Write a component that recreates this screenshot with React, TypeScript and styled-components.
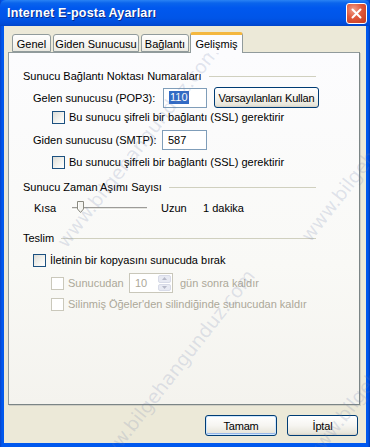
import * as React from 'react';
import styled, { createGlobalStyle } from 'styled-components';

const GlobalStyle = createGlobalStyle`
  html, body {
    margin: 0;
    padding: 0;
    background: #ece9d8;
  }
  body {
    font-family: "Liberation Sans", Arial, sans-serif;
    font-size: 11px;
    color: #000;
  }
  * {
    box-sizing: border-box;
  }
`;

const Window = styled.div`
  position: relative;
  width: 370px;
  height: 447px;
  display: flex;
  flex-direction: column;
  background: linear-gradient(90deg, #0843c8 0, #0058ee 2px, #0058ee 368px, #0038b0 370px);
  overflow: hidden;
`;

const TitleBar = styled.div`
  height: 26px;
  flex: none;
  display: flex;
  align-items: center;
  justify-content: space-between;
  padding: 0 3px 0 7px;
  background: linear-gradient(
    180deg,
    #2a83f4 0,
    #0a64ec 3px,
    #0058ee 8px,
    #0055e8 18px,
    #004bd8 24px,
    #0044c8 26px
  );
  border-radius: 6px 6px 0 0;
`;

const Title = styled.span`
  font-family: "Liberation Sans", Arial, sans-serif;
  font-weight: bold;
  font-size: 12.5px;
  color: #fff;
  text-shadow: 1px 1px 0 #0a2a8a;
  letter-spacing: 0.2px;
`;

const CloseButton = styled.div`
  width: 21px;
  height: 21px;
  border: 1px solid #fff;
  border-radius: 3px;
  background: radial-gradient(circle at 35% 30%, #f0a08c 0, #e0573a 45%, #c23a1f 100%);
  display: flex;
  align-items: center;
  justify-content: center;
`;

const Body = styled.div`
  flex: 1;
  display: flex;
  flex-direction: column;
  margin: 0 4px 4px 4px;
  padding: 6px 6px 0 4px;
  background: #ece9d8;
`;

const TabStrip = styled.div`
  display: flex;
  align-items: flex-end;
  height: 20px;
  padding-left: 4px;
  gap: 2px;
  position: relative;
  z-index: 1;
`;

const Tab = styled.div<{ $active?: boolean; $w: number }>`
  width: ${({ $w }) => $w}px;
  flex: none;
  text-align: center;
  height: ${({ $active }) => ($active ? '21px' : '18px')};
  margin: ${({ $active }) => ($active ? '0 -1px -1px -1px' : '0')};
  padding-top: 2px;
  border: 1px solid #919b9c;
  border-bottom: ${({ $active }) => ($active ? 'none' : '1px solid #919b9c')};
  border-top: ${({ $active }) => ($active ? '3px solid #f4b73f' : '1px solid #919b9c')};
  border-radius: 3px 3px 0 0;
  background: ${({ $active }) =>
    $active ? '#fcfcfe' : 'linear-gradient(180deg, #fefefe 0, #f4f3ee 70%, #e9e8e0 100%)'};
  font-size: 11px;
  white-space: nowrap;
  line-height: 14px;
`;

const Panel = styled.div`
  height: 353px;
  border: 1px solid #919b9c;
  border-right-color: #7b8586;
  border-bottom-color: #7b8586;
  box-shadow: 1px 1px 0 #d0cfc5;
  background: linear-gradient(180deg, #fcfcfe 0, #f9f9f6 60%, #f4f3ee 100%);
  padding: 15px 43px 0 14px;
  display: flex;
  flex-direction: column;
`;

const GroupHeader = styled.div<{ $top: number }>`
  display: flex;
  align-items: center;
  height: 16px;
  margin-top: ${({ $top }) => $top}px;
  gap: 7px;

  &::after {
    content: '';
    flex: 1;
    height: 0;
    border-top: 1px solid #d0d0bf;
  }
`;

const Row = styled.div<{ $top: number; $indent: number; $h?: number }>`
  display: flex;
  align-items: center;
  height: ${({ $h }) => $h ?? 14}px;
  margin-top: ${({ $top }) => $top}px;
  padding-left: ${({ $indent }) => $indent}px;
  white-space: nowrap;
`;

const FieldLabel = styled.span<{ $w: number }>`
  width: ${({ $w }) => $w}px;
  flex: none;
`;

const TextInput = styled.div<{ $w: number; $disabled?: boolean }>`
  width: ${({ $w }) => $w}px;
  height: 20px;
  flex: none;
  border: 1px solid ${({ $disabled }) => ($disabled ? '#c9c7ba' : '#7f9db9')};
  background: #fff;
  display: flex;
  align-items: center;
  padding-left: 5px;
  color: ${({ $disabled }) => ($disabled ? '#aca899' : '#000')};
  position: relative;
`;

const Selected = styled.span`
  background: #316ac5;
  color: #fff;
  padding: 0 1px;
  line-height: 13px;
`;

const PushButton = styled.button<{ $default?: boolean; $w: number; $gap?: number }>`
  width: ${({ $w }) => $w}px;
  height: 21px;
  flex: none;
  margin-left: ${({ $gap }) => $gap ?? 0}px;
  padding: 0;
  border: 1px solid #003c74;
  border-radius: 3px;
  background: linear-gradient(180deg, #ffffff 0, #f6f5f1 50%, #e7e5da 90%, #d6d0c5 100%);
  box-shadow: ${({ $default }) =>
    $default ? 'inset 0 0 0 1px #cee7ff, inset 0 -1px 0 1px #98b8ea' : 'none'};
  font-family: "Liberation Sans", Arial, sans-serif;
  font-size: 11px;
  letter-spacing: -0.2px;
  white-space: nowrap;
  color: #000;
`;

const CheckBox = styled.span<{ $disabled?: boolean }>`
  width: 13px;
  height: 13px;
  flex: none;
  margin-right: 4px;
  border: 1px solid ${({ $disabled }) => ($disabled ? '#cac8bb' : '#1c5180')};
  background: ${({ $disabled }) =>
    $disabled ? '#fff' : 'linear-gradient(135deg, #dcdcd7 0, #f4f4f0 60%, #ffffff 100%)'};
`;

const Faded = styled.span<{ $w?: number; $gap?: number }>`
  color: #aca899;
  width: ${({ $w }) => ($w ? `${$w}px` : 'auto')};
  margin-left: ${({ $gap }) => $gap ?? 0}px;
  flex: none;
`;

const SliderBox = styled.div`
  width: 75px;
  height: 14px;
  flex: none;
  position: relative;
  margin-right: 14px;
`;

const SliderTrack = styled.div`
  position: absolute;
  left: 0;
  right: 0;
  top: 6px;
  height: 3px;
  border-top: 1px solid #9d9c99;
  border-bottom: 1px solid #ffffff;
  background: #e6e6e0;
`;

const Thumb = styled.svg`
  position: absolute;
  left: 5px;
  top: 0;
`;

const SpinButtons = styled.div`
  position: absolute;
  right: 1px;
  top: 1px;
  bottom: 1px;
  width: 13px;
  display: flex;
  flex-direction: column;
  gap: 1px;
`;

const SpinHalf = styled.div`
  flex: 1;
  border-radius: 2px;
  background: #e8eaf3;
  border: 1px solid #d8dbe8;
  display: flex;
  align-items: center;
  justify-content: center;
`;

const Footer = styled.div`
  flex: 1;
  display: flex;
  justify-content: flex-end;
  align-items: flex-start;
  gap: 10px;
  padding: 10px 2px 0 0;
`;

const Watermark = styled.div`
  position: absolute;
  inset: 0;
  pointer-events: none;
  overflow: hidden;
`;

const Mark = styled.span`
  position: absolute;
  font-family: "DejaVu Sans", Verdana, sans-serif;
  font-size: 19px;
  color: rgba(110, 125, 170, 0.2);
  transform-origin: 0 0;
  transform: rotate(-52deg);
  white-space: nowrap;
`;

const marks = [
  { left: 52, top: 238 },
  { left: 88, top: 462 },
  { left: 296, top: 232 },
  { left: 300, top: 452 },
];

const SSL = 'Bu sunucu şifreli bir bağlantı (SSL) gerektirir';

export default function App() {
  return (
    <>
      <GlobalStyle />
      <Window>
        <TitleBar>
          <Title>Internet E-posta Ayarları</Title>
          <CloseButton>
            <svg width="11" height="11" viewBox="0 0 11 11">
              <path d="M1.5 1.5 L9.5 9.5 M9.5 1.5 L1.5 9.5" stroke="#fff" strokeWidth="2" strokeLinecap="round" />
            </svg>
          </CloseButton>
        </TitleBar>
        <Body>
          <TabStrip>
            <Tab $w={39}>Genel</Tab>
            <Tab $w={86}>Giden Sunucusu</Tab>
            <Tab $w={48}>Bağlantı</Tab>
            <Tab $w={53} $active>
              Gelişmiş
            </Tab>
          </TabStrip>
          <Panel>
            <GroupHeader $top={0}>Sunucu Bağlantı Noktası Numaraları</GroupHeader>
            <Row $top={3} $indent={10} $h={21}>
              <FieldLabel $w={130}>Gelen sunucusu (POP3):</FieldLabel>
              <TextInput $w={44}>
                <Selected>110</Selected>
              </TextInput>
              <PushButton $w={105} $gap={7}>
                Varsayılanları Kullan
              </PushButton>
            </Row>
            <Row $top={2} $indent={29}>
              <CheckBox />
              {SSL}
            </Row>
            <Row $top={6} $indent={10} $h={20}>
              <FieldLabel $w={129}>Giden sunucusu (SMTP):</FieldLabel>
              <TextInput $w={45}>587</TextInput>
            </Row>
            <Row $top={5} $indent={29}>
              <CheckBox />
              {SSL}
            </Row>

            <GroupHeader $top={10}>Sunucu Zaman Aşımı Sayısı</GroupHeader>
            <Row $top={3} $indent={11} $h={20}>
              <FieldLabel $w={38}>Kısa</FieldLabel>
              <SliderBox>
                <SliderTrack />
                <Thumb width="7" height="12" viewBox="0 0 7 12">
                  <path d="M0.5 0.5 H6.5 V8 L3.5 11.5 L0.5 8 Z" fill="#f4f4f0" stroke="#8a8a80" />
                  <path d="M1.5 1.5 V8" stroke="#fff" />
                </Thumb>
              </SliderBox>
              <FieldLabel $w={42}>Uzun</FieldLabel>
              <span>1 dakika</span>
            </Row>

            <GroupHeader $top={12}>Teslim</GroupHeader>
            <Row $top={7} $indent={10}>
              <CheckBox />
              İletinin bir kopyasını sunucuda bırak
            </Row>
            <Row $top={6} $indent={28} $h={20}>
              <CheckBox $disabled />
              <Faded $w={61}>Sunucudan</Faded>
              <TextInput $w={44} $disabled>
                10
                <SpinButtons>
                  <SpinHalf>
                    <svg width="5" height="3" viewBox="0 0 5 3">
                      <path d="M0 3 L2.5 0 L5 3 Z" fill="#b6b9c8" />
                    </svg>
                  </SpinHalf>
                  <SpinHalf>
                    <svg width="5" height="3" viewBox="0 0 5 3">
                      <path d="M0 0 L2.5 3 L5 0 Z" fill="#b6b9c8" />
                    </svg>
                  </SpinHalf>
                </SpinButtons>
              </TextInput>
              <Faded $gap={7}>gün sonra kaldır</Faded>
            </Row>
            <Row $top={4} $indent={28}>
              <CheckBox $disabled />
              <Faded>Silinmiş Öğeler'den silindiğinde sunucudan kaldır</Faded>
            </Row>
          </Panel>
          <Footer>
            <PushButton $w={72} $default>
              Tamam
            </PushButton>
            <PushButton $w={71}>İptal</PushButton>
          </Footer>
        </Body>
        <Watermark>
          {marks.map((m, i) => (
            <Mark key={i} style={{ left: m.left, top: m.top }}>
              www.bilgehangunduz.com
            </Mark>
          ))}
        </Watermark>
      </Window>
    </>
  );
}
